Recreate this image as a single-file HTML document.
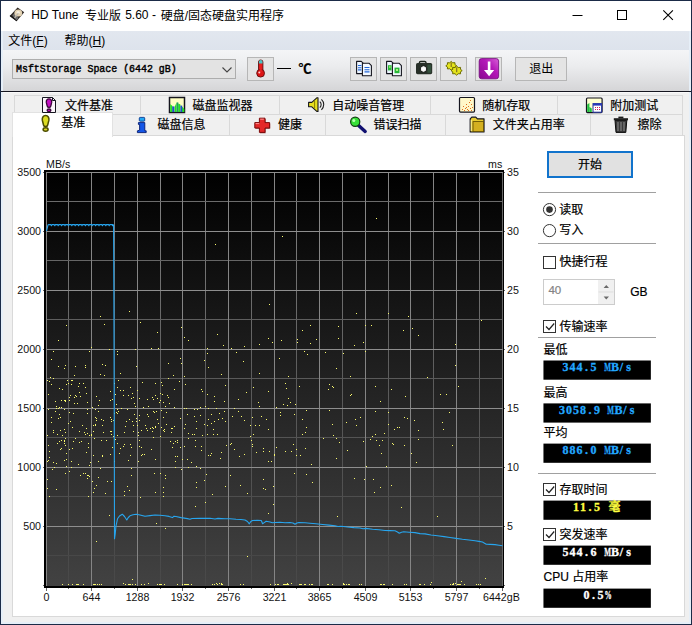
<!DOCTYPE html>
<html lang="zh"><head><meta charset="utf-8"><title>HD Tune</title><style>
html,body{margin:0;padding:0}
body{width:692px;height:625px;position:relative;overflow:hidden;background:#f0f0f0;font-family:"Liberation Sans",sans-serif;font-size:10.67px;color:#000}
body>div,body>svg,body>span{position:absolute}
div{box-sizing:border-box}
.t{position:absolute;overflow:visible;pointer-events:none}
.tx{position:absolute;font-family:"Liberation Sans","Noto Sans CJK SC",sans-serif;font-size:12px;line-height:17px;white-space:nowrap;color:#000}
.tb{-webkit-text-stroke:0.2px currentColor}
.mono{font-family:"Liberation Mono",monospace;white-space:nowrap}
.ax{position:absolute;font-size:10.67px;line-height:12px;white-space:nowrap;color:#111}
.val{position:absolute;background:#000;font-family:"Liberation Serif",serif;font-weight:bold;font-size:12px;line-height:13px;white-space:nowrap;text-align:center}
.val i{display:inline-block;font-style:normal}
.val b{display:inline-block;width:7px;text-align:center;font-weight:bold;-webkit-text-stroke:0.3px currentColor}
</style></head><body>
<div style="left:0px;top:0px;width:692px;height:625px;background:#1b2b47"></div>
<div style="left:1px;top:1px;width:690px;height:30px;background:#fff"></div>
<div style="left:1px;top:31px;width:690px;height:19px;background:linear-gradient(#e2e7ef,#dde3ec)"></div>
<div style="left:1px;top:50px;width:690px;height:41px;background:linear-gradient(#f4f5f7,#ebecee 40%,#d5d5d7)"></div>
<div style="left:1px;top:91px;width:690px;height:1px;background:#15151f"></div>
<div style="left:1px;top:92px;width:690px;height:532px;background:#f0f0f0;border-top:1px solid #fafafa"></div>
<div style="left:1px;top:31px;width:2px;height:593px;background:#e6eff8"></div>
<div style="left:689px;top:31px;width:2px;height:593px;background:#e6eff8"></div>
<div style="left:1px;top:622px;width:690px;height:2px;background:#e6eff8"></div>
<div style="left:1px;top:91px;width:690px;height:1px;background:#15151f"></div>
<svg class="t" style="left:0;top:0;width:60px;height:31px" viewBox="0 0 60 31" aria-hidden="true"><path d="M17.6 7.6L24.2 12.2L16.6 21.3L9.7 16z" fill="#2b2521"/><path d="M9.7 16L16.6 21.3L17.2 20.5L10.4 15.2z" fill="#111"/><path d="M12.2 15.2L15.3 12.2L18.6 18.6L16.4 20.2z" fill="#6d6d6d"/><ellipse cx="18.3" cy="13" rx="3.9" ry="3.5" fill="#e4d3b3"/><ellipse cx="18.2" cy="12.6" rx="1.7" ry="1.5" fill="#f7efe0"/><path d="M18.4 13.2L14.6 17.8" stroke="#bfb9ae" stroke-width="1.2"/></svg>
<span class="tx" style="left:31.2px;top:7.4px">HD Tune</span>
<span class="tx" style="left:84.9px;top:7.5px">专业版</span>
<span class="tx" style="left:125.2px;top:7.4px">5.60 -</span>
<span class="tx" style="left:160.7px;top:7.5px">硬盘/固态硬盘实用程序</span>
<svg class="t" style="left:560px;top:1px;width:131px;height:30px" viewBox="0 0 131 30" aria-hidden="true"><path d="M12.5 14.5h10" stroke="#000" stroke-width="1" fill="none"/><rect x="57.5" y="9.5" width="9" height="9" stroke="#000" stroke-width="1" fill="none"/><path d="M103.3 9.3l9.6 9.6M112.9 9.3l-9.6 9.6" stroke="#000" stroke-width="1.1" fill="none"/></svg>
<span class="tx" style="left:8.3px;top:32.8px">文件(<u>F</u>)</span>
<span class="tx" style="left:64.6px;top:32.8px">帮助(<u>H</u>)</span>
<div style="left:12px;top:59px;width:224px;height:20px;background:#e3e3e3;border:1px solid #adadad;box-sizing:border-box"></div>
<div class="mono" style="left:15.5px;top:63.8px;font-size:10px;line-height:12px;color:#000;transform-origin:0 0;transform:scale(0.992,1.06);-webkit-text-stroke:0.4px #000">MsftStorage Space (6442 gB)</div>
<svg class="t" style="left:221px;top:66px;width:12px;height:8px" viewBox="0 0 12 8" aria-hidden="true"><path d="M1.5 1.5l4.5 4.5l4.5-4.5" stroke="#444" stroke-width="1.1" fill="none"/></svg>
<div style="left:247px;top:57px;width:27px;height:24px;background:#e4e4e4;border:1px solid #b6b6b6;box-sizing:border-box"></div>
<div style="left:277px;top:68px;width:14px;height:1px;background:#000"></div>
<span class="tx tb" style="left:298.6px;top:60.2px;font-size:13px;font-weight:bold">℃</span>
<div style="left:350px;top:57px;width:27px;height:24px;background:#e4e4e4;border:1px solid #b6b6b6;box-sizing:border-box"></div>
<div style="left:380px;top:57px;width:27px;height:24px;background:#e4e4e4;border:1px solid #b6b6b6;box-sizing:border-box"></div>
<div style="left:410px;top:57px;width:27px;height:24px;background:#e4e4e4;border:1px solid #b6b6b6;box-sizing:border-box"></div>
<div style="left:440px;top:57px;width:27px;height:24px;background:#e4e4e4;border:1px solid #b6b6b6;box-sizing:border-box"></div>
<div style="left:475px;top:57px;width:27px;height:24px;background:#e4e4e4;border:1px solid #b6b6b6;box-sizing:border-box"></div>
<div style="left:515px;top:57px;width:52px;height:24px;background:#e4e4e4;border:1px solid #b6b6b6;box-sizing:border-box"></div>
<span class="tx" style="left:529.2px;top:61.4px">退出</span>
<svg class="t" style="left:240px;top:52px;width:270px;height:34px" viewBox="240 52 270 34" aria-hidden="true"><defs><linearGradient id="pg" x1="0" y1="1" x2="1" y2="0"><stop offset="0" stop-color="#8a0890"/><stop offset="0.6" stop-color="#b418b8"/><stop offset="1" stop-color="#d860d8"/></linearGradient></defs><rect x="258.5" y="60" width="4.4" height="13" rx="2" fill="#e01818" stroke="#601010" stroke-width="0.9"/><path d="M258.9 63.6v-1.8a1.8 1.8 0 0 1 3.6 0v1.8z" fill="#49c4c4"/><circle cx="260.6" cy="73.2" r="3.9" fill="#dc1414" stroke="#601010" stroke-width="0.9"/><rect x="259.6" y="64" width="2.2" height="8" fill="#e82020"/><circle cx="259.3" cy="72.6" r="1" fill="#ffd0d0"/><path d="M356.6 61.4h4.7l2.5 2.5v9.7h-7.2z" fill="#eef6ff" stroke="#15151f" stroke-width="1.1" stroke-linejoin="round"/><path d="M362.4 63.2h6.5l2.5 2.5v10.1h-9z" fill="#f4f9ff" stroke="#15151f" stroke-width="1.1" stroke-linejoin="round"/><path d="M358 65.5h3.4M358 67.7h3.4M358 69.9h3.4M364.5 67.5h5M364.5 69.7h5M364.5 71.9h5" stroke="#2468d8" stroke-width="1.1"/><path d="M386.6 61.4h4.7l2.5 2.5v9.7h-7.2z" fill="#eef6ff" stroke="#15151f" stroke-width="1.1" stroke-linejoin="round"/><path d="M392.4 63.2h6.5l2.5 2.5v10.1h-9z" fill="#f4f9ff" stroke="#15151f" stroke-width="1.1" stroke-linejoin="round"/><rect x="388" y="65.2" width="3.6" height="5.2" fill="#28b838"/><rect x="394.5" y="67.6" width="5" height="5.6" fill="#28b838"/><rect x="389" y="66" width="1.6" height="2" fill="#88e060"/><rect x="396" y="69" width="2" height="2" fill="#b0f080"/><path d="M419.4 63.4v-0.8a1.3 1.3 0 0 1 1.3-1.3h4a1.3 1.3 0 0 1 1.3 1.3v0.8z" fill="none" stroke="#1c241c" stroke-width="1.3"/><rect x="416" y="63" width="16.2" height="11.2" rx="1.6" fill="#283028"/><rect x="427.4" y="64.6" width="3.8" height="8.2" fill="#34503c"/><circle cx="423.5" cy="69" r="3.3" fill="#f4f4f4" stroke="#101410" stroke-width="1"/><circle cx="423.5" cy="69" r="1.6" fill="#fff"/><polygon points="456.6,65.8 454.9,67.1 455.0,68.9 452.7,68.8 451.2,70.2 449.7,68.8 447.4,68.9 447.5,67.1 445.8,65.8 447.5,64.5 447.4,62.7 449.7,62.8 451.2,61.4 452.7,62.8 455.0,62.7 454.9,64.5" fill="#e4e41c" stroke="#6c6c00" stroke-width="1" stroke-linejoin="round"/><polygon points="462.2,70.6 460.4,71.9 460.6,73.8 458.2,73.7 456.6,75.2 455.0,73.7 452.6,73.8 452.8,71.9 451.0,70.6 452.8,69.3 452.6,67.4 455.0,67.5 456.6,66.0 458.2,67.5 460.6,67.4 460.4,69.3" fill="#e4e41c" stroke="#6c6c00" stroke-width="1" stroke-linejoin="round"/><rect x="450.6" y="62.4" width="1.3" height="4.6" fill="#8c7c20"/><rect x="456" y="67.4" width="1.3" height="4.8" fill="#8c7c20"/><rect x="479.2" y="58.6" width="19.4" height="20.2" rx="2.4" fill="url(#pg)" stroke="#70087a" stroke-width="0.8"/><path d="M487.8 61.6h2.6v8.4h3.8l-5.1 6.2l-5.1-6.2h3.8z" fill="#fff"/></svg>
<div style="left:14px;top:95px;width:669px;height:20px;background:#f0f0f0;border:1px solid #d9d9d9;box-sizing:border-box"></div>
<div style="left:140px;top:96px;width:1px;height:18px;background:#d9d9d9"></div>
<div style="left:279px;top:96px;width:1px;height:18px;background:#d9d9d9"></div>
<div style="left:430px;top:96px;width:1px;height:18px;background:#d9d9d9"></div>
<div style="left:557px;top:96px;width:1px;height:18px;background:#d9d9d9"></div>
<div style="left:14px;top:114px;width:669px;height:22px;background:#f0f0f0;border:1px solid #d9d9d9;box-sizing:border-box"></div>
<div style="left:229px;top:115px;width:1px;height:20px;background:#d9d9d9"></div>
<div style="left:325px;top:115px;width:1px;height:20px;background:#d9d9d9"></div>
<div style="left:445px;top:115px;width:1px;height:20px;background:#d9d9d9"></div>
<div style="left:590px;top:115px;width:1px;height:20px;background:#d9d9d9"></div>
<div style="left:12px;top:135px;width:673px;height:482px;background:#fff;border:1px solid #d9d9d9;box-sizing:border-box"></div>
<div style="left:12px;top:112px;width:101px;height:25px;background:#fff;border:1px solid #e2e2e2;border-bottom:none;box-sizing:border-box"></div>
<span class="tx tb" style="left:64.9px;top:97.7px">文件基准</span>
<span class="tx tb" style="left:192.4px;top:97.7px">磁盘监视器</span>
<span class="tx tb" style="left:332.2px;top:97.7px">自动噪音管理</span>
<span class="tx tb" style="left:482.3px;top:97.7px">随机存取</span>
<span class="tx tb" style="left:610.2px;top:97.7px">附加测试</span>
<span class="tx tb" style="left:61.2px;top:115.4px">基准</span>
<span class="tx tb" style="left:157.5px;top:117.2px">磁盘信息</span>
<span class="tx tb" style="left:278px;top:117.2px">健康</span>
<span class="tx tb" style="left:373.6px;top:117.2px">错误扫描</span>
<span class="tx tb" style="left:492.8px;top:117.2px">文件夹占用率</span>
<span class="tx tb" style="left:637.5px;top:117.2px">擦除</span>
<svg class="t" style="left:0;top:92px;width:692px;height:46px" viewBox="0 92 692 46" aria-hidden="true"><path d="M42.5 97.5h10l3 3v12h-13z" fill="#fbf6fb" stroke="#15151f" stroke-width="1"/><path d="M52.5 97.5v3h3" fill="none" stroke="#15151f" stroke-width="1"/><path d="M49 98.8c1.9 0 2.9 1.6 2.7 3.6l-0.9 3.6c-0.3 1.2-0.9 1.4-1.8 1.4s-1.5-0.2-1.8-1.4l-0.9-3.6c-0.2-2 0.8-3.6 2.7-3.6z" fill="#c410c4" stroke="#3a063a" stroke-width="1.3"/><ellipse cx="49" cy="110.3" rx="1.9" ry="1.3" fill="#c410c4" stroke="#3a063a" stroke-width="1.3"/><rect x="169.5" y="97.5" width="15" height="15" fill="#ffffc4" stroke="#15151f" stroke-width="1.5"/><path d="M170.2 112v-8l2.2 2v6z M174.6 112v-5l2-4.4v9.4z M178.2 112v-8.6l2.2 1.2v7.4z M182 112v-5.4l2.3 2.4v3z" fill="#22e022"/><rect x="172.2" y="106.4" width="2.2" height="5.6" fill="#2050c8"/><rect x="176.6" y="102.4" width="1.7" height="9.6" fill="#20a060"/><rect x="180.4" y="105.6" width="1.8" height="6.4" fill="#2050c8"/><path d="M308.6 102.4h3.2l5-4.6h1.2v13.6h-1.2l-5-4.6h-3.2z" fill="#e8e020" stroke="#15151f" stroke-width="1.1" stroke-linejoin="round"/><path d="M314.6 100.5v8" stroke="#8a8000" stroke-width="1"/><path d="M319.8 101.6a4 4 0 0 1 0 6M321.4 99.4a7 7 0 0 1 0 10.4" fill="none" stroke="#222" stroke-width="1.1"/><rect x="459.5" y="97.5" width="15" height="14.6" rx="1" fill="#fff8c8" stroke="#15151f" stroke-width="1.2"/><path d="M462 109h1v1h-1zM463 106h1v1h-1zM465 108h1v1h-1zM466 104h1v1h-1zM467 109h1v1h-1zM468 106h1v1h-1zM469 102h1v1h-1zM470 108h1v1h-1zM471 104h1v1h-1zM472 107h1v1h-1zM464 110h1v1h-1zM471 110h1v1h-1zM468 110h1v1h-1zM470 100h1v1h-1zM466 107h1v1h-1z" fill="#e07020"/><rect x="586.5" y="98" width="15.6" height="14.6" rx="1" fill="#ffffd0" stroke="#15151f" stroke-width="1.2"/><path d="M587.2 112v-7.6l2.2-1.4v9zM589.6 112v-5l2.2 1.4v3.6z" fill="#20c040"/><rect x="593" y="103.6" width="8.6" height="8.6" fill="#fff" stroke="#2030a0" stroke-width="1"/><rect x="593" y="103.6" width="8.6" height="2" fill="#2838b8"/><path d="M595 107h1v1h-1zM597 107h1v1h-1zM599 107h1v1h-1zM595 109h1v1h-1zM597 109h1v1h-1zM599 109h1v1h-1z" fill="#d02060"/><path d="M45.6 115.6c2.6 0 3.6 2.2 3.3 4.6l-1.2 4.8c-0.3 1.3-1 1.6-2.1 1.6s-1.8-0.3-2.1-1.6l-1.2-4.8c-0.3-2.4 0.7-4.6 3.3-4.6z" fill="#dcdc22" stroke="#4c4c00" stroke-width="1.5"/><ellipse cx="45.6" cy="129.5" rx="2.5" ry="1.7" fill="#dcdc22" stroke="#4c4c00" stroke-width="1.5"/><rect x="139.3" y="117.4" width="5.4" height="3.8" rx="0.8" fill="#22a8f4" stroke="#0a3890" stroke-width="0.9"/><path d="M138.4 122.6h6.4v8.2h1.4v1.8h-8.8v-1.8l2.2-0.6v-5.8h-1.2z" fill="#1456e8" stroke="#061c70" stroke-width="0.9" stroke-linejoin="round"/><path d="M260 119h5.6v4.4h4.6v5.4h-4.6v4.4h-5.6v-4.4h-4.6v-5.4h4.6z" fill="#7a0c0c" opacity="0.75"/><path d="M259.4 118.2h5.6v4.4h4.6v5.4h-4.6v4.4h-5.6v-4.4h-4.6v-5.4h4.6z" fill="#e42828" stroke="#7a0c0c" stroke-width="1" stroke-linejoin="round"/><path d="M260.2 119.2h3.6M255.6 123.6h3.6" stroke="#ff9090" stroke-width="1"/><path d="M358.6 125.4l6.6 6" stroke="#101070" stroke-width="3.4" stroke-linecap="round"/><circle cx="355.2" cy="121.8" r="4.6" fill="#38e038" stroke="#104010" stroke-width="1.2"/><circle cx="353.8" cy="120.4" r="1.5" fill="#b8ffb0"/><path d="M470.2 118.8l1.6-1.6h4l1.6 1.6h6.6v13.2h-13.8z" fill="#e8cc30" stroke="#15151f" stroke-width="1.2" stroke-linejoin="round"/><rect x="473" y="121.6" width="10.6" height="10" fill="#d4b020" stroke="#5a4800" stroke-width="0.8"/><path d="M471.2 120v11" stroke="#fff4a0" stroke-width="1"/><path d="M615 120.4h11.8l-1 12h-9.8z" fill="#3a3a3a" stroke="#0c0c0c" stroke-width="1"/><rect x="613.8" y="118.2" width="14.2" height="2.2" fill="#1c1c1c"/><rect x="618.4" y="116.6" width="5" height="1.8" fill="#1c1c1c"/><path d="M618 122v9M621 122v9M624 122v9" stroke="#9a9a9a" stroke-width="0.9"/></svg>
<svg class="t" style="left:44px;top:170px;width:460px;height:418px" viewBox="44 170 460 418" aria-hidden="true"><defs><linearGradient id="cg" x1="0" y1="0" x2="0" y2="1"><stop offset="0" stop-color="#000"/><stop offset="1" stop-color="#424242"/></linearGradient></defs><rect x="44" y="170" width="460" height="418" fill="#000"/><rect x="46" y="172" width="457" height="414" fill="url(#cg)"/><linearGradient id="mg" gradientUnits="userSpaceOnUse" x1="0" y1="172" x2="0" y2="586"><stop offset="0" stop-color="#868686"/><stop offset="0.5" stop-color="#5c5c5c"/><stop offset="1" stop-color="#484848"/></linearGradient><g fill="url(#mg)" shape-rendering="crispEdges"><rect x="68" y="172" width="1" height="414"/><rect x="114" y="172" width="1" height="414"/><rect x="160" y="172" width="1" height="414"/><rect x="205" y="172" width="1" height="414"/><rect x="251" y="172" width="1" height="414"/><rect x="296" y="172" width="1" height="414"/><rect x="342" y="172" width="1" height="414"/><rect x="388" y="172" width="1" height="414"/><rect x="433" y="172" width="1" height="414"/><rect x="479" y="172" width="1" height="414"/></g><g shape-rendering="crispEdges"><rect x="46" y="201" width="457" height="1" fill="#6b6b6b"/><rect x="46" y="260" width="457" height="1" fill="#656565"/><rect x="46" y="319" width="457" height="1" fill="#5f5f5f"/><rect x="46" y="378" width="457" height="1" fill="#5a5a5a"/><rect x="46" y="437" width="457" height="1" fill="#545454"/><rect x="46" y="496" width="457" height="1" fill="#4e4e4e"/><rect x="46" y="555" width="457" height="1" fill="#484848"/></g><g fill="#858585" shape-rendering="crispEdges"><rect x="46" y="172" width="1" height="414"/><rect x="91" y="172" width="1" height="414"/><rect x="137" y="172" width="1" height="414"/><rect x="182" y="172" width="1" height="414"/><rect x="228" y="172" width="1" height="414"/><rect x="274" y="172" width="1" height="414"/><rect x="319" y="172" width="1" height="414"/><rect x="365" y="172" width="1" height="414"/><rect x="410" y="172" width="1" height="414"/><rect x="456" y="172" width="1" height="414"/><rect x="502" y="172" width="1" height="414"/></g><rect x="502" y="172" width="1" height="414" fill="#666" shape-rendering="crispEdges"/><g fill="#8e8e8e" shape-rendering="crispEdges"><rect x="46" y="172" width="457" height="1"/><rect x="46" y="231" width="457" height="1"/><rect x="46" y="290" width="457" height="1"/><rect x="46" y="349" width="457" height="1"/><rect x="46" y="408" width="457" height="1"/><rect x="46" y="467" width="457" height="1"/><rect x="46" y="526" width="457" height="1"/></g><rect x="44" y="586" width="460" height="2" fill="#000"/><path d="M47 380h1v1h-1zM47 435h1v1h-1zM47 461h1v1h-1zM47 479h1v1h-1zM47 488h1v1h-1zM48 394h1v1h-1zM48 409h1v1h-1zM48 445h1v1h-1zM48 460h1v1h-1zM49 381h1v1h-1zM49 451h1v1h-1zM49 457h1v1h-1zM49 496h1v1h-1zM50 377h1v1h-1zM51 359h1v1h-1zM51 384h1v1h-1zM51 417h1v1h-1zM51 422h1v1h-1zM52 469h1v1h-1zM53 351h1v1h-1zM53 378h1v1h-1zM53 430h1v1h-1zM53 432h1v1h-1zM53 462h1v1h-1zM54 467h1v1h-1zM55 401h1v1h-1zM55 411h1v1h-1zM56 406h1v1h-1zM56 408h1v1h-1zM56 463h1v1h-1zM56 489h1v1h-1zM57 434h1v1h-1zM57 443h1v1h-1zM58 340h1v1h-1zM58 366h1v1h-1zM58 408h1v1h-1zM58 418h1v1h-1zM59 388h1v1h-1zM59 407h1v1h-1zM59 414h1v1h-1zM59 441h1v1h-1zM60 417h1v1h-1zM60 430h1v1h-1zM60 449h1v1h-1zM61 400h1v1h-1zM61 407h1v1h-1zM61 440h1v1h-1zM61 448h1v1h-1zM62 389h1v1h-1zM62 435h1v1h-1zM62 584h1v1h-1zM64 368h1v1h-1zM64 400h1v1h-1zM64 409h1v1h-1zM64 429h1v1h-1zM64 440h1v1h-1zM64 441h1v1h-1zM64 443h1v1h-1zM64 460h1v1h-1zM65 365h1v1h-1zM65 400h1v1h-1zM65 401h1v1h-1zM65 432h1v1h-1zM65 438h1v1h-1zM65 445h1v1h-1zM65 473h1v1h-1zM66 325h1v1h-1zM66 384h1v1h-1zM66 453h1v1h-1zM66 459h1v1h-1zM66 466h1v1h-1zM67 380h1v1h-1zM68 383h1v1h-1zM68 423h1v1h-1zM68 584h1v1h-1zM69 397h1v1h-1zM69 400h1v1h-1zM69 412h1v1h-1zM69 449h1v1h-1zM69 471h1v1h-1zM70 395h1v1h-1zM70 421h1v1h-1zM71 380h1v1h-1zM71 384h1v1h-1zM71 461h1v1h-1zM71 467h1v1h-1zM72 380h1v1h-1zM72 427h1v1h-1zM72 448h1v1h-1zM72 584h1v1h-1zM73 413h1v1h-1zM73 441h1v1h-1zM74 375h1v1h-1zM74 397h1v1h-1zM74 403h1v1h-1zM75 366h1v1h-1zM75 395h1v1h-1zM75 438h1v1h-1zM76 396h1v1h-1zM76 584h1v1h-1zM77 403h1v1h-1zM77 584h1v1h-1zM78 386h1v1h-1zM78 464h1v1h-1zM78 584h1v1h-1zM79 383h1v1h-1zM79 392h1v1h-1zM79 431h1v1h-1zM79 442h1v1h-1zM80 396h1v1h-1zM80 475h1v1h-1zM81 441h1v1h-1zM82 425h1v1h-1zM83 383h1v1h-1zM83 473h1v1h-1zM83 584h1v1h-1zM84 432h1v1h-1zM85 365h1v1h-1zM85 367h1v1h-1zM85 387h1v1h-1zM85 434h1v1h-1zM85 473h1v1h-1zM86 393h1v1h-1zM86 428h1v1h-1zM86 452h1v1h-1zM87 402h1v1h-1zM87 409h1v1h-1zM87 413h1v1h-1zM87 433h1v1h-1zM87 475h1v1h-1zM87 478h1v1h-1zM88 443h1v1h-1zM88 447h1v1h-1zM88 475h1v1h-1zM88 496h1v1h-1zM89 351h1v1h-1zM89 435h1v1h-1zM89 465h1v1h-1zM89 476h1v1h-1zM90 462h1v1h-1zM91 347h1v1h-1zM91 434h1v1h-1zM91 435h1v1h-1zM92 407h1v1h-1zM92 481h1v1h-1zM93 425h1v1h-1zM93 431h1v1h-1zM93 455h1v1h-1zM93 492h1v1h-1zM93 584h1v1h-1zM94 438h1v1h-1zM94 488h1v1h-1zM94 584h1v1h-1zM95 409h1v1h-1zM95 417h1v1h-1zM95 424h1v1h-1zM95 425h1v1h-1zM95 584h1v1h-1zM96 396h1v1h-1zM96 418h1v1h-1zM96 420h1v1h-1zM96 485h1v1h-1zM96 541h1v1h-1zM97 584h1v1h-1zM98 405h1v1h-1zM98 411h1v1h-1zM98 461h1v1h-1zM98 477h1v1h-1zM99 400h1v1h-1zM99 584h1v1h-1zM100 316h1v1h-1zM100 374h1v1h-1zM100 468h1v1h-1zM101 419h1v1h-1zM101 440h1v1h-1zM101 584h1v1h-1zM102 364h1v1h-1zM102 425h1v1h-1zM102 455h1v1h-1zM102 456h1v1h-1zM103 420h1v1h-1zM103 432h1v1h-1zM104 324h1v1h-1zM104 375h1v1h-1zM105 365h1v1h-1zM105 493h1v1h-1zM106 440h1v1h-1zM107 481h1v1h-1zM109 349h1v1h-1zM109 515h1v1h-1zM110 391h1v1h-1zM110 400h1v1h-1zM110 417h1v1h-1zM110 431h1v1h-1zM110 454h1v1h-1zM111 419h1v1h-1zM111 421h1v1h-1zM111 431h1v1h-1zM111 434h1v1h-1zM111 481h1v1h-1zM112 399h1v1h-1zM112 447h1v1h-1zM113 420h1v1h-1zM113 436h1v1h-1zM114 383h1v1h-1zM114 413h1v1h-1zM114 461h1v1h-1zM115 394h1v1h-1zM115 439h1v1h-1zM116 404h1v1h-1zM116 412h1v1h-1zM117 351h1v1h-1zM117 354h1v1h-1zM117 387h1v1h-1zM117 409h1v1h-1zM117 413h1v1h-1zM117 435h1v1h-1zM117 443h1v1h-1zM118 380h1v1h-1zM118 411h1v1h-1zM119 453h1v1h-1zM120 373h1v1h-1zM120 390h1v1h-1zM120 448h1v1h-1zM121 408h1v1h-1zM123 390h1v1h-1zM123 395h1v1h-1zM123 446h1v1h-1zM123 583h1v1h-1zM124 432h1v1h-1zM124 444h1v1h-1zM124 491h1v1h-1zM124 495h1v1h-1zM125 426h1v1h-1zM125 584h1v1h-1zM126 421h1v1h-1zM127 409h1v1h-1zM127 486h1v1h-1zM128 395h1v1h-1zM128 460h1v1h-1zM128 584h1v1h-1zM129 311h1v1h-1zM129 419h1v1h-1zM129 490h1v1h-1zM129 584h1v1h-1zM130 387h1v1h-1zM130 444h1v1h-1zM130 455h1v1h-1zM130 584h1v1h-1zM131 398h1v1h-1zM131 447h1v1h-1zM131 468h1v1h-1zM131 475h1v1h-1zM132 393h1v1h-1zM132 421h1v1h-1zM132 579h1v1h-1zM132 584h1v1h-1zM133 397h1v1h-1zM133 425h1v1h-1zM133 431h1v1h-1zM134 403h1v1h-1zM134 414h1v1h-1zM135 349h1v1h-1zM135 406h1v1h-1zM135 584h1v1h-1zM136 366h1v1h-1zM136 418h1v1h-1zM136 421h1v1h-1zM137 390h1v1h-1zM137 425h1v1h-1zM138 432h1v1h-1zM138 435h1v1h-1zM138 461h1v1h-1zM139 398h1v1h-1zM139 415h1v1h-1zM139 420h1v1h-1zM139 440h1v1h-1zM139 446h1v1h-1zM140 322h1v1h-1zM140 497h1v1h-1zM141 430h1v1h-1zM141 447h1v1h-1zM141 455h1v1h-1zM141 584h1v1h-1zM142 382h1v1h-1zM142 454h1v1h-1zM143 407h1v1h-1zM144 454h1v1h-1zM144 584h1v1h-1zM145 425h1v1h-1zM146 428h1v1h-1zM147 399h1v1h-1zM147 414h1v1h-1zM147 430h1v1h-1zM148 406h1v1h-1zM148 416h1v1h-1zM148 583h1v1h-1zM150 428h1v1h-1zM151 348h1v1h-1zM151 449h1v1h-1zM152 397h1v1h-1zM152 427h1v1h-1zM152 431h1v1h-1zM153 399h1v1h-1zM153 411h1v1h-1zM153 428h1v1h-1zM153 437h1v1h-1zM154 412h1v1h-1zM154 473h1v1h-1zM155 383h1v1h-1zM155 395h1v1h-1zM155 426h1v1h-1zM155 427h1v1h-1zM155 459h1v1h-1zM155 492h1v1h-1zM156 411h1v1h-1zM156 523h1v1h-1zM157 332h1v1h-1zM157 398h1v1h-1zM157 419h1v1h-1zM157 584h1v1h-1zM158 348h1v1h-1zM158 423h1v1h-1zM159 402h1v1h-1zM159 584h1v1h-1zM160 393h1v1h-1zM160 400h1v1h-1zM160 436h1v1h-1zM160 473h1v1h-1zM160 584h1v1h-1zM161 382h1v1h-1zM161 410h1v1h-1zM161 427h1v1h-1zM161 584h1v1h-1zM162 385h1v1h-1zM162 394h1v1h-1zM163 402h1v1h-1zM163 417h1v1h-1zM163 430h1v1h-1zM163 487h1v1h-1zM163 492h1v1h-1zM163 496h1v1h-1zM164 429h1v1h-1zM164 431h1v1h-1zM164 584h1v1h-1zM165 406h1v1h-1zM165 475h1v1h-1zM165 478h1v1h-1zM165 528h1v1h-1zM166 412h1v1h-1zM166 424h1v1h-1zM167 395h1v1h-1zM168 363h1v1h-1zM168 378h1v1h-1zM168 397h1v1h-1zM169 403h1v1h-1zM170 441h1v1h-1zM171 428h1v1h-1zM171 432h1v1h-1zM172 428h1v1h-1zM172 447h1v1h-1zM173 375h1v1h-1zM173 443h1v1h-1zM174 389h1v1h-1zM174 407h1v1h-1zM174 426h1v1h-1zM175 441h1v1h-1zM175 456h1v1h-1zM175 461h1v1h-1zM175 467h1v1h-1zM177 440h1v1h-1zM177 442h1v1h-1zM177 456h1v1h-1zM177 584h1v1h-1zM179 381h1v1h-1zM180 358h1v1h-1zM180 418h1v1h-1zM180 447h1v1h-1zM181 327h1v1h-1zM181 363h1v1h-1zM181 469h1v1h-1zM182 459h1v1h-1zM182 584h1v1h-1zM184 337h1v1h-1zM184 376h1v1h-1zM184 408h1v1h-1zM184 428h1v1h-1zM184 446h1v1h-1zM184 584h1v1h-1zM185 384h1v1h-1zM185 424h1v1h-1zM185 584h1v1h-1zM186 408h1v1h-1zM186 584h1v1h-1zM187 414h1v1h-1zM187 459h1v1h-1zM187 584h1v1h-1zM188 340h1v1h-1zM188 433h1v1h-1zM188 438h1v1h-1zM188 467h1v1h-1zM188 584h1v1h-1zM191 462h1v1h-1zM191 584h1v1h-1zM192 434h1v1h-1zM194 409h1v1h-1zM194 416h1v1h-1zM194 434h1v1h-1zM195 440h1v1h-1zM195 446h1v1h-1zM195 506h1v1h-1zM196 421h1v1h-1zM196 428h1v1h-1zM196 466h1v1h-1zM196 482h1v1h-1zM196 487h1v1h-1zM197 409h1v1h-1zM200 407h1v1h-1zM200 415h1v1h-1zM200 468h1v1h-1zM201 389h1v1h-1zM201 446h1v1h-1zM201 450h1v1h-1zM202 391h1v1h-1zM202 435h1v1h-1zM204 360h1v1h-1zM204 424h1v1h-1zM204 480h1v1h-1zM205 406h1v1h-1zM205 502h1v1h-1zM206 474h1v1h-1zM207 348h1v1h-1zM207 353h1v1h-1zM207 394h1v1h-1zM207 425h1v1h-1zM207 434h1v1h-1zM208 367h1v1h-1zM208 408h1v1h-1zM208 419h1v1h-1zM208 455h1v1h-1zM210 455h1v1h-1zM211 414h1v1h-1zM211 423h1v1h-1zM211 453h1v1h-1zM212 494h1v1h-1zM212 584h1v1h-1zM213 429h1v1h-1zM213 434h1v1h-1zM214 396h1v1h-1zM214 401h1v1h-1zM214 421h1v1h-1zM214 584h1v1h-1zM215 244h1v1h-1zM216 408h1v1h-1zM216 583h1v1h-1zM217 334h1v1h-1zM217 434h1v1h-1zM217 584h1v1h-1zM218 419h1v1h-1zM219 413h1v1h-1zM219 583h1v1h-1zM220 458h1v1h-1zM221 374h1v1h-1zM221 452h1v1h-1zM221 583h1v1h-1zM221 584h1v1h-1zM222 418h1v1h-1zM222 584h1v1h-1zM223 345h1v1h-1zM224 401h1v1h-1zM224 411h1v1h-1zM225 385h1v1h-1zM225 421h1v1h-1zM225 486h1v1h-1zM226 445h1v1h-1zM230 444h1v1h-1zM230 475h1v1h-1zM231 348h1v1h-1zM231 443h1v1h-1zM232 416h1v1h-1zM234 408h1v1h-1zM234 449h1v1h-1zM236 352h1v1h-1zM238 399h1v1h-1zM238 411h1v1h-1zM239 456h1v1h-1zM240 485h1v1h-1zM240 584h1v1h-1zM241 416h1v1h-1zM243 361h1v1h-1zM243 584h1v1h-1zM244 346h1v1h-1zM244 420h1v1h-1zM244 454h1v1h-1zM246 392h1v1h-1zM247 493h1v1h-1zM247 556h1v1h-1zM250 425h1v1h-1zM250 436h1v1h-1zM251 440h1v1h-1zM252 417h1v1h-1zM252 444h1v1h-1zM252 446h1v1h-1zM253 387h1v1h-1zM253 434h1v1h-1zM255 425h1v1h-1zM256 452h1v1h-1zM258 402h1v1h-1zM259 344h1v1h-1zM259 373h1v1h-1zM259 406h1v1h-1zM259 425h1v1h-1zM261 416h1v1h-1zM263 448h1v1h-1zM263 451h1v1h-1zM263 479h1v1h-1zM263 488h1v1h-1zM265 489h1v1h-1zM266 419h1v1h-1zM268 338h1v1h-1zM268 391h1v1h-1zM268 429h1v1h-1zM268 461h1v1h-1zM268 513h1v1h-1zM269 304h1v1h-1zM269 451h1v1h-1zM270 584h1v1h-1zM271 461h1v1h-1zM272 342h1v1h-1zM273 486h1v1h-1zM273 504h1v1h-1zM274 454h1v1h-1zM274 455h1v1h-1zM275 584h1v1h-1zM276 407h1v1h-1zM276 447h1v1h-1zM277 584h1v1h-1zM278 584h1v1h-1zM279 358h1v1h-1zM280 412h1v1h-1zM280 415h1v1h-1zM281 340h1v1h-1zM282 236h1v1h-1zM283 404h1v1h-1zM283 584h1v1h-1zM284 584h1v1h-1zM285 383h1v1h-1zM285 451h1v1h-1zM285 584h1v1h-1zM286 388h1v1h-1zM286 584h1v1h-1zM287 405h1v1h-1zM287 583h1v1h-1zM287 584h1v1h-1zM288 376h1v1h-1zM288 398h1v1h-1zM288 584h1v1h-1zM290 402h1v1h-1zM291 451h1v1h-1zM291 583h1v1h-1zM293 444h1v1h-1zM294 414h1v1h-1zM294 473h1v1h-1zM295 404h1v1h-1zM296 449h1v1h-1zM296 455h1v1h-1zM297 339h1v1h-1zM297 342h1v1h-1zM299 386h1v1h-1zM299 584h1v1h-1zM300 455h1v1h-1zM300 584h1v1h-1zM301 584h1v1h-1zM302 330h1v1h-1zM302 419h1v1h-1zM302 434h1v1h-1zM304 351h1v1h-1zM304 584h1v1h-1zM305 432h1v1h-1zM305 448h1v1h-1zM305 584h1v1h-1zM306 410h1v1h-1zM306 427h1v1h-1zM306 474h1v1h-1zM307 354h1v1h-1zM309 584h1v1h-1zM310 325h1v1h-1zM310 343h1v1h-1zM311 464h1v1h-1zM311 584h1v1h-1zM312 482h1v1h-1zM312 584h1v1h-1zM316 339h1v1h-1zM323 438h1v1h-1zM325 352h1v1h-1zM327 584h1v1h-1zM328 389h1v1h-1zM328 584h1v1h-1zM329 384h1v1h-1zM329 410h1v1h-1zM332 386h1v1h-1zM332 424h1v1h-1zM332 584h1v1h-1zM333 387h1v1h-1zM333 435h1v1h-1zM336 368h1v1h-1zM336 438h1v1h-1zM336 458h1v1h-1zM337 516h1v1h-1zM338 326h1v1h-1zM338 338h1v1h-1zM339 442h1v1h-1zM343 353h1v1h-1zM343 583h1v1h-1zM343 584h1v1h-1zM344 584h1v1h-1zM346 422h1v1h-1zM346 584h1v1h-1zM347 450h1v1h-1zM348 584h1v1h-1zM349 584h1v1h-1zM350 376h1v1h-1zM350 395h1v1h-1zM351 394h1v1h-1zM354 345h1v1h-1zM354 478h1v1h-1zM355 419h1v1h-1zM356 313h1v1h-1zM356 425h1v1h-1zM359 584h1v1h-1zM360 417h1v1h-1zM361 584h1v1h-1zM363 342h1v1h-1zM363 441h1v1h-1zM364 479h1v1h-1zM365 325h1v1h-1zM365 351h1v1h-1zM366 466h1v1h-1zM370 439h1v1h-1zM371 325h1v1h-1zM372 436h1v1h-1zM373 479h1v1h-1zM374 492h1v1h-1zM375 386h1v1h-1zM375 411h1v1h-1zM375 434h1v1h-1zM376 218h1v1h-1zM376 440h1v1h-1zM379 445h1v1h-1zM380 401h1v1h-1zM380 487h1v1h-1zM380 584h1v1h-1zM381 453h1v1h-1zM381 584h1v1h-1zM382 440h1v1h-1zM383 584h1v1h-1zM384 433h1v1h-1zM384 584h1v1h-1zM386 466h1v1h-1zM388 313h1v1h-1zM388 412h1v1h-1zM388 424h1v1h-1zM391 389h1v1h-1zM391 485h1v1h-1zM392 443h1v1h-1zM392 584h1v1h-1zM393 444h1v1h-1zM394 429h1v1h-1zM397 427h1v1h-1zM399 427h1v1h-1zM401 507h1v1h-1zM403 330h1v1h-1zM404 417h1v1h-1zM404 445h1v1h-1zM404 584h1v1h-1zM405 396h1v1h-1zM406 584h1v1h-1zM407 418h1v1h-1zM408 316h1v1h-1zM411 453h1v1h-1zM412 328h1v1h-1zM414 420h1v1h-1zM416 462h1v1h-1zM418 335h1v1h-1zM418 430h1v1h-1zM418 439h1v1h-1zM419 584h1v1h-1zM420 584h1v1h-1zM424 584h1v1h-1zM427 377h1v1h-1zM430 584h1v1h-1zM431 582h1v1h-1zM437 516h1v1h-1zM440 394h1v1h-1zM442 422h1v1h-1zM443 429h1v1h-1zM446 394h1v1h-1zM449 412h1v1h-1zM450 584h1v1h-1zM452 445h1v1h-1zM452 584h1v1h-1zM453 583h1v1h-1zM453 584h1v1h-1zM455 344h1v1h-1zM455 365h1v1h-1zM455 583h1v1h-1zM457 584h1v1h-1zM458 386h1v1h-1zM458 584h1v1h-1zM459 584h1v1h-1zM460 584h1v1h-1zM461 581h1v1h-1zM464 584h1v1h-1zM476 584h1v1h-1zM478 584h1v1h-1zM480 584h1v1h-1zM481 320h1v1h-1zM485 578h1v1h-1z" fill="#fafa6e" shape-rendering="crispEdges"/><polyline points="46.5,231.0 47.0,229.0 48.0,225.0 48.5,224.6 50.9,224.6 51.4,225.8 51.9,224.6 51.9,224.6 54.3,224.6 54.8,225.8 55.3,224.6 55.3,224.6 57.7,224.6 58.2,225.8 58.7,224.6 58.7,224.6 61.1,224.6 61.6,225.8 62.1,224.6 62.1,224.6 64.5,224.6 65.0,225.8 65.5,224.6 65.5,224.6 67.9,224.6 68.4,225.8 68.9,224.6 68.9,224.6 71.3,224.6 71.8,225.8 72.3,224.6 72.3,224.6 74.7,224.6 75.2,225.8 75.7,224.6 75.7,224.6 78.1,224.6 78.6,225.8 79.1,224.6 79.1,224.6 81.5,224.6 82.0,225.8 82.5,224.6 82.5,224.6 84.9,224.6 85.4,225.8 85.9,224.6 85.9,224.6 88.3,224.6 88.8,225.8 89.3,224.6 89.3,224.6 91.7,224.6 92.2,225.8 92.7,224.6 92.7,224.6 95.1,224.6 95.6,225.8 96.1,224.6 96.1,224.6 98.5,224.6 99.0,225.8 99.5,224.6 99.5,224.6 101.9,224.6 102.4,225.8 102.9,224.6 102.9,224.6 105.3,224.6 105.8,225.8 106.3,224.6 106.3,224.6 108.7,224.6 109.2,225.8 109.7,224.6 109.7,224.6 112.1,224.6 112.6,225.8 113.1,224.6 112.6,224.6 113.6,225.5 113.9,300.0 114.2,400.0 114.5,538.8 115.2,534.0 116.0,526.0 117.5,518.8 119.5,516.0 122.3,514.2 124.5,516.5 126.8,520.0 128.3,517.5 130.0,515.8 133.0,514.8 136.3,514.3 140.0,515.0 145.0,516.2 150.0,515.6 155.0,515.0 160.0,515.3 165.0,515.8 169.0,516.4 172.5,517.6 174.0,516.2 176.0,516.5 181.0,517.6 187.5,518.6 190.0,519.2 192.0,518.5 200.0,518.4 210.0,518.3 215.0,519.0 218.0,518.4 225.0,518.8 230.0,518.8 236.0,519.3 241.0,519.5 245.0,520.0 247.5,521.5 249.3,523.8 250.8,521.5 252.5,520.5 257.0,520.3 261.3,520.5 262.6,523.8 264.2,522.6 266.2,521.2 270.0,522.0 272.5,522.8 275.0,522.5 280.0,522.2 285.0,522.8 290.0,522.5 293.0,523.0 295.0,524.3 297.0,523.0 298.8,522.5 305.0,522.8 310.0,523.2 316.0,523.8 322.5,524.5 329.0,525.1 335.0,525.8 338.0,526.5 341.0,526.2 347.5,527.0 354.0,527.6 360.0,528.0 363.0,528.8 366.0,528.4 372.5,529.2 379.0,529.8 385.0,530.5 390.0,530.6 395.0,530.8 397.5,532.0 399.3,533.3 401.5,532.3 403.8,531.8 409.0,532.2 415.0,532.6 420.0,533.6 425.0,533.9 431.0,535.0 437.5,535.8 444.0,536.6 450.0,537.5 456.0,538.4 462.5,539.3 469.0,540.0 475.0,540.8 479.0,541.4 482.5,542.0 484.5,543.2 486.3,544.3 490.0,544.4 495.0,544.6 499.0,545.2 502.5,545.8" fill="none" stroke="#27a5ee" stroke-width="1.1" stroke-linejoin="round"/></svg>
<svg class="t" style="left:0;top:0;width:692px;height:625px" viewBox="0 0 692 625" fill="#666" shape-rendering="crispEdges" aria-hidden="true"><rect x="43" y="172" width="1" height="1"/><rect x="504" y="172" width="1" height="1"/><rect x="43" y="231" width="1" height="1"/><rect x="504" y="231" width="1" height="1"/><rect x="43" y="290" width="1" height="1"/><rect x="504" y="290" width="1" height="1"/><rect x="43" y="349" width="1" height="1"/><rect x="504" y="349" width="1" height="1"/><rect x="43" y="408" width="1" height="1"/><rect x="504" y="408" width="1" height="1"/><rect x="43" y="467" width="1" height="1"/><rect x="504" y="467" width="1" height="1"/><rect x="43" y="526" width="1" height="1"/><rect x="504" y="526" width="1" height="1"/><rect x="43" y="585" width="1" height="1"/><rect x="504" y="585" width="1" height="1"/><rect x="46" y="588" width="1" height="3"/><rect x="68" y="588" width="1" height="1"/><rect x="91" y="588" width="1" height="3"/><rect x="114" y="588" width="1" height="1"/><rect x="137" y="588" width="1" height="3"/><rect x="160" y="588" width="1" height="1"/><rect x="182" y="588" width="1" height="3"/><rect x="205" y="588" width="1" height="1"/><rect x="228" y="588" width="1" height="3"/><rect x="251" y="588" width="1" height="1"/><rect x="274" y="588" width="1" height="3"/><rect x="296" y="588" width="1" height="1"/><rect x="319" y="588" width="1" height="3"/><rect x="342" y="588" width="1" height="1"/><rect x="365" y="588" width="1" height="3"/><rect x="388" y="588" width="1" height="1"/><rect x="410" y="588" width="1" height="3"/><rect x="433" y="588" width="1" height="1"/><rect x="456" y="588" width="1" height="3"/><rect x="479" y="588" width="1" height="1"/><rect x="502" y="588" width="1" height="3"/></svg>
<div class="ax" style="left:46px;top:158px">MB/s</div>
<div class="ax" style="left:488px;top:158px">ms</div>
<div class="ax" style="left:0px;width:41px;text-align:right;top:166px">3500</div>
<div class="ax" style="left:507px;top:166px">35</div>
<div class="ax" style="left:0px;width:41px;text-align:right;top:225px">3000</div>
<div class="ax" style="left:507px;top:225px">30</div>
<div class="ax" style="left:0px;width:41px;text-align:right;top:284px">2500</div>
<div class="ax" style="left:507px;top:284px">25</div>
<div class="ax" style="left:0px;width:41px;text-align:right;top:343px">2000</div>
<div class="ax" style="left:507px;top:343px">20</div>
<div class="ax" style="left:0px;width:41px;text-align:right;top:402px">1500</div>
<div class="ax" style="left:507px;top:402px">15</div>
<div class="ax" style="left:0px;width:41px;text-align:right;top:461px">1000</div>
<div class="ax" style="left:507px;top:461px">10</div>
<div class="ax" style="left:0px;width:41px;text-align:right;top:520px">500</div>
<div class="ax" style="left:507px;top:520px">5</div>
<div class="ax" style="left:16.5px;width:60px;text-align:center;top:591px">0</div>
<div class="ax" style="left:61.5px;width:60px;text-align:center;top:591px">644</div>
<div class="ax" style="left:107.5px;width:60px;text-align:center;top:591px">1288</div>
<div class="ax" style="left:152.5px;width:60px;text-align:center;top:591px">1932</div>
<div class="ax" style="left:198.5px;width:60px;text-align:center;top:591px">2576</div>
<div class="ax" style="left:244.5px;width:60px;text-align:center;top:591px">3221</div>
<div class="ax" style="left:289.5px;width:60px;text-align:center;top:591px">3865</div>
<div class="ax" style="left:335.5px;width:60px;text-align:center;top:591px">4509</div>
<div class="ax" style="left:380.5px;width:60px;text-align:center;top:591px">5153</div>
<div class="ax" style="left:426.5px;width:60px;text-align:center;top:591px">5797</div>
<div class="ax" style="left:483px;top:591px">6442gB</div>
<div style="left:547px;top:151px;width:86px;height:27px;background:#e1e1e1;border:2px solid #1173cc"></div>
<span class="tx tb" style="left:577.9px;top:156.5px">开始</span>
<div style="left:538px;top:192px;width:118px;height:1px;background:#a0a0a0"></div>
<div style="left:538px;top:243px;width:118px;height:1px;background:#a0a0a0"></div>
<div style="left:538px;top:337px;width:118px;height:1px;background:#a0a0a0"></div>
<div style="left:538px;top:473px;width:118px;height:1px;background:#a0a0a0"></div>
<svg class="t" style="left:536px;top:196px;width:30px;height:420px" viewBox="536 196 30 420" aria-hidden="true"><circle cx="549.5" cy="209.6" r="6.1" fill="#fff" stroke="#333" stroke-width="1"/><circle cx="549.5" cy="209.6" r="3.3" fill="#333"/><circle cx="549.5" cy="230.6" r="6.1" fill="#fff" stroke="#333" stroke-width="1"/><rect x="543.5" y="256.5" width="12" height="12" fill="#fff" stroke="#333" stroke-width="1"/><rect x="543.5" y="320.5" width="12" height="12" fill="#fff" stroke="#333" stroke-width="1"/><path d="M546 326.5 l3 3 l5.2 -6" fill="none" stroke="#222" stroke-width="1.2"/><rect x="543.5" y="483.5" width="12" height="12" fill="#fff" stroke="#333" stroke-width="1"/><path d="M546 489.5 l3 3 l5.2 -6" fill="none" stroke="#222" stroke-width="1.2"/><rect x="543.5" y="528.5" width="12" height="12" fill="#fff" stroke="#333" stroke-width="1"/><path d="M546 534.5 l3 3 l5.2 -6" fill="none" stroke="#222" stroke-width="1.2"/></svg>
<span class="tx tb" style="left:559.2px;top:201.5px">读取</span>
<span class="tx tb" style="left:559.2px;top:222.3px">写入</span>
<span class="tx tb" style="left:559.4px;top:254.3px">快捷行程</span>
<span class="tx tb" style="left:559.4px;top:318.5px">传输速率</span>
<span class="tx tb" style="left:559.4px;top:481.5px">存取时间</span>
<span class="tx tb" style="left:559.4px;top:526.8px">突发速率</span>
<div style="left:543px;top:279px;width:72px;height:26px;background:#fff;border:1px solid #ccc"></div>
<div style="left:598px;top:280px;width:16px;height:24px;background:#f0f0f0"></div>
<svg class="t" style="left:598px;top:280px;width:16px;height:24px" viewBox="0 0 16 24" aria-hidden="true"><path d="M5.6 8l2.7-3l2.7 3zM5.6 16.4l2.7 3l2.7-3z" fill="#6a6a6a"/><path d="M0.5 12h15" stroke="#ddd" stroke-width="1"/></svg>
<span class="tx tb" style="left:548.4px;top:282px;font-size:11.5px;color:#838383">40</span>
<span class="tx tb" style="left:630.2px;top:284.1px">GB</span>
<span class="tx tb" style="left:543.4px;top:341.5px">最低</span>
<span class="tx tb" style="left:543.4px;top:384.9px">最高</span>
<span class="tx tb" style="left:543.4px;top:424.9px">平均</span>
<span class="tx tb" style="left:543.6px;top:568.5px">CPU 占用率</span>
<svg class="t" style="left:540px;top:358px;width:116px;height:24px" viewBox="540 358 116 24" aria-hidden="true"><rect x="543.45" y="360.5" width="107.4" height="19.2" fill="#000"/></svg>
<div class="val" style="left:543px;top:361px;width:108px;height:19px;color:#22a8ff;background:none"><b>3</b><b>4</b><b>4</b><b>.</b><b>5</b><b>&nbsp;</b><b><i style="margin:0 -2.2px;transform:scaleX(.6)">M</i></b><b>B</b><b>/</b><b>s</b></div>
<svg class="t" style="left:540px;top:401px;width:116px;height:24px" viewBox="540 401 116 24" aria-hidden="true"><rect x="543.45" y="403.4" width="107.4" height="19.2" fill="#000"/></svg>
<div class="val" style="left:543px;top:404px;width:108px;height:19px;color:#22a8ff;background:none"><b>3</b><b>0</b><b>5</b><b>8</b><b>.</b><b>9</b><b>&nbsp;</b><b><i style="margin:0 -2.2px;transform:scaleX(.6)">M</i></b><b>B</b><b>/</b><b>s</b></div>
<svg class="t" style="left:540px;top:441px;width:116px;height:24px" viewBox="540 441 116 24" aria-hidden="true"><rect x="543.45" y="443.6" width="107.4" height="19.2" fill="#000"/></svg>
<div class="val" style="left:543px;top:444px;width:108px;height:19px;color:#22a8ff;background:none"><b>8</b><b>8</b><b>6</b><b>.</b><b>0</b><b>&nbsp;</b><b><i style="margin:0 -2.2px;transform:scaleX(.6)">M</i></b><b>B</b><b>/</b><b>s</b></div>
<svg class="t" style="left:540px;top:498px;width:116px;height:24px" viewBox="540 498 116 24" aria-hidden="true"><rect x="543.45" y="500.6" width="107.4" height="19.2" fill="#000"/></svg>
<div class="val" style="left:543px;top:501px;width:108px;height:19px;color:#ffff40;background:none"><b>1</b><b>1</b><b>.</b><b>5</b><b>&nbsp;</b><b style="width:14px;line-height:13px;vertical-align:top;font-family:'Liberation Serif','Noto Serif CJK SC',serif">毫</b></div>
<svg class="t" style="left:540px;top:543px;width:116px;height:24px" viewBox="540 543 116 24" aria-hidden="true"><rect x="543.45" y="545.6" width="107.4" height="19.2" fill="#000"/></svg>
<div class="val" style="left:543px;top:546px;width:108px;height:19px;color:#fff;background:none"><b>5</b><b>4</b><b>4</b><b>.</b><b>6</b><b>&nbsp;</b><b><i style="margin:0 -2.2px;transform:scaleX(.6)">M</i></b><b>B</b><b>/</b><b>s</b></div>
<svg class="t" style="left:540px;top:586px;width:116px;height:24px" viewBox="540 586 116 24" aria-hidden="true"><rect x="543.45" y="588.6" width="107.4" height="19.2" fill="#000"/></svg>
<div class="val" style="left:543px;top:589px;width:108px;height:19px;color:#fff;background:none"><b>0</b><b>.</b><b>5</b><b><i style="margin:0 -2.5px;transform:scaleX(.6)">%</i></b></div>
</body></html>
